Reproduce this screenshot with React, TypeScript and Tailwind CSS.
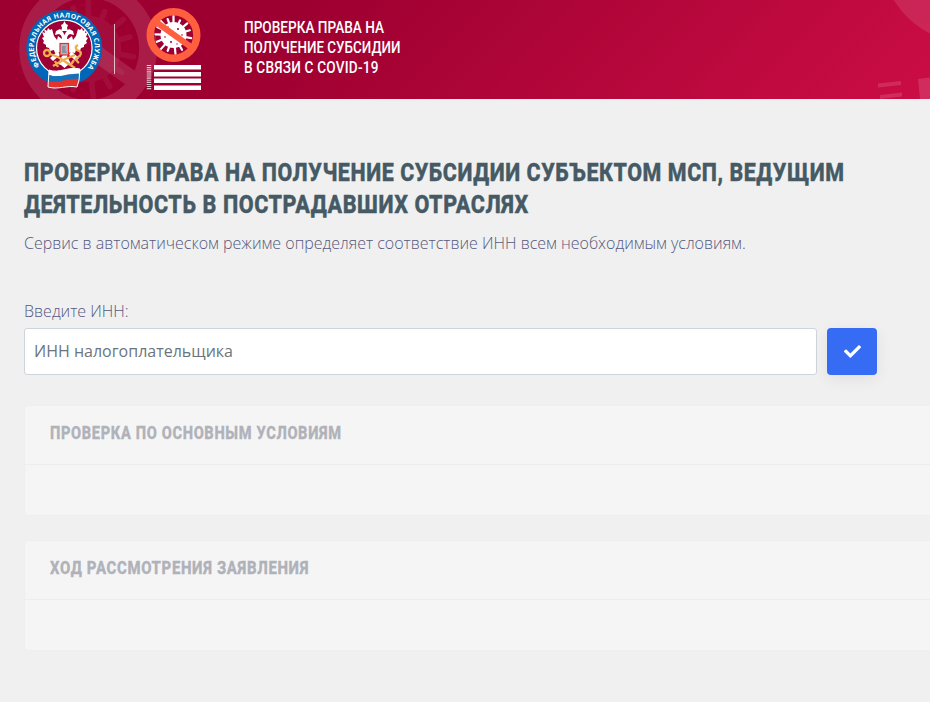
import React from "react";
import { FaCheck } from "react-icons/fa";

type CardProps = {
  title: string;
  scale: string;
};

// angle, length of the spikes of the virus
const spikes = [
  [0, 19], [24, 16], [50, 18], [74, 17], [100, 18], [125, 16], [150, 17],
  [174, 19], [200, 17], [222, 20], [248, 18], [272, 18], [296, 18], [318, 19], [340, 17],
];

function Virus() {
  return (
    <g>
      <g stroke="#fff" strokeWidth="2.200" strokeLinecap="round">
        {spikes.map(([angle, len]) => (
          <path key={angle} d={`M0 0V-${len}`} transform={`translate(27.500 27) rotate(${angle})`} />
        ))}
      </g>
      <circle cx="27.500" cy="27" r="13" fill="#fff" />
    </g>
  );
}

function Backdrop() {
  return (
    <svg className="absolute inset-0" width="930" height="99" viewBox="0 0 930 99">
      <g transform="translate(18 -20) scale(2.550)">
        <g opacity=".05">
          <Virus />
        </g>
        <g opacity=".11" fill="none" stroke="#fff">
          <path d="M10 14l35 25" strokeWidth="6.500" />
          <circle cx="27.500" cy="27" r="23.500" strokeWidth="7" />
        </g>
      </g>
      <circle cx="970" cy="-46" r="89" fill="#fff" fillOpacity=".11" />
      <path d="M878 83.500l23-2.500v4l-23 2.500zM880 95l22-2.500v4l-22 2.500zM918 79l12-1.500V99h-10z" fill="#fff" fillOpacity=".13" />
    </svg>
  );
}

function Emblem() {
  return (
    <svg className="shrink-0" width="78" height="84" viewBox="0 0 78 84">
      <defs>
        <path id="ring" d="M14.300 58.800A30.500 30.500 0 1 1 60.600 60.800" />
      </defs>
      <circle cx="38.300" cy="40" r="38" fill="#0067b8" />
      <circle cx="38.300" cy="40" r="27.800" fill="#9d0034" stroke="#fff" strokeWidth="1.200" />
      <text fill="#fff" fontSize="6.800" fontWeight="700" fontFamily="'Open Sans', sans-serif">
        <textPath href="#ring" startOffset="1" textLength="136">ФЕДЕРАЛЬНАЯ НАЛОГОВАЯ СЛУЖБА</textPath>
      </text>
      {/* eagle */}
      <g fill="#fff">
        <path d="M36 20l-1-3 2-1 1.500-3 1.500 3 2 1-1 3 1 3h-7z" />
        <path d="M36 32c0-4-1-5-3-6l-4 1 1-4 4-2 3 3 1.500 3 1.500-3 3-3 4 2 1 4-4-1c-2 1-3 2-3 6z" />
        <path d="M36 31l-4-3-1 4-3-4-2-7-2 1-2-2-1 3-3-2 1 4-3-1 2 5-2 1 2 3-1 2 3 2v2l3 1 1 3 4-1 1 3 5-1 5 7 5-7 5 1 1-3 4 1 1-3 3-1v-2l3-2-1-2 2-3-2-1 2-5-3 1 1-4-3 2-1-3-2 2-2-1-2 7-3 4-1-4-4 3z" />
        <path d="M32 43l-8 7 3 3 7-6zM45 43l8 7-3 3-7-6zM36 48l-4 8 3 1 3.500 3 3.500-3 3-1-4-8z" />
      </g>
      <g fill="none" stroke="#efae4b" strokeWidth="2.300">
        <circle cx="21" cy="45" r="3" />
        <path d="M24 46l8 3 17 11M52 37c-4 2-2 5 1 6s2 5-1 6-2 4 1 6M27 58l10-6 12-5M29 53l3 6M44 58l4-6" />
      </g>
      <rect x="34" y="35.500" width="8.500" height="11.500" fill="#b0b4bc" stroke="#ee2b24" strokeWidth="1.200" />
      <path d="M36 38h4l-1 3 2 4h-5z" fill="#8a939f" />
      {/* flag */}
      <g>
        <path d="M23 62c10 4 20-4 31-1v5c-11-2-20 5-31 1z" fill="#fff" />
        <path d="M23 67c10 4 20-3 31-1v6c-11-2-20 5-31 1z" fill="#1471b9" />
        <path d="M22 73c10 3 20-4 32-2l-3 8c-11-2-18 3-28 0z" fill="#e2332c" />
        <path d="M23 62c10 4 20-4 31-1l-1 11-2 7c-11-2-18 3-29 0z" fill="none" stroke="#fff" strokeWidth="1" />
      </g>
    </svg>
  );
}

function CovidLogo() {
  return (
    <svg className="shrink-0" width="55" height="84" viewBox="0 0 55 84">
      <Virus />
      <g fill="#9d0034">
        <circle cx="22" cy="19" r=".8" />
        <circle cx="32" cy="21" r="1" />
        <circle cx="36" cy="27" r=".8" />
        <circle cx="19" cy="29" r=".8" />
        <circle cx="25" cy="34" r="1" />
        <circle cx="31" cy="36" r=".7" />
      </g>
      <g fill="none" stroke="#ff5f3e">
        <path d="M10 14l35 25" strokeWidth="6" />
        <circle cx="27.500" cy="27" r="23.300" strokeWidth="7.400" />
      </g>
      <path d="M8 57h47v4.500H8zM8 64h47v4.500H8zM8 70.500h47V75H8zM8 77.500h47V82H8z" fill="#fff" />
      <path d="M3 57v25" stroke="#fff" strokeOpacity=".75" strokeWidth="4.500" strokeDasharray="1.100 1" />
    </svg>
  );
}

function Card({ title, scale }: CardProps) {
  return (
    <section className="h-[111px] w-[1000px] rounded border border-[#eee] bg-[#f5f5f5]">
      <div className="h-[59px] border-b border-[#ededed] pl-[25px] pt-[13px]">
        <h2 className={`inline-block origin-left whitespace-nowrap font-['Roboto',sans-serif] text-[18px] font-extrabold leading-7 tracking-[0.8px] text-[#b0b2ba] [-webkit-text-stroke:0.3px_#b0b2ba] ${scale}`}>
          {title}
        </h2>
      </div>
    </section>
  );
}

function App() {
  return (
    <div className="h-[702px] w-full overflow-hidden bg-[#f0f0f0] font-['Open_Sans',sans-serif] text-base">
      <header className="relative h-[99px] overflow-hidden bg-[linear-gradient(135deg,#9d0030_30%,#cb0d45)]">
        <Backdrop />
        <div className="relative flex pl-[26px] pt-2">
          <Emblem />
          <div className="ml-[10px] mt-4 h-[50px] w-px bg-white/70" />
          <div className="ml-[31px]">
            <CovidLogo />
          </div>
          <div className="ml-[43px] mt-[9px] flex flex-col items-start whitespace-nowrap font-['Roboto',sans-serif] text-[17px] font-medium leading-5 text-white">
            <span className="origin-left scale-x-[0.8]">ПРОВЕРКА ПРАВА НА</span>
            <span className="origin-left scale-x-[0.79]">ПОЛУЧЕНИЕ СУБСИДИИ</span>
            <span className="origin-left scale-x-[0.8] tracking-[0.250px]">В СВЯЗИ С COVID-19</span>
          </div>
        </div>
      </header>

      <main className="pl-6 pt-[57px]">
        <h1 className="flex flex-col items-start whitespace-nowrap font-['Roboto',sans-serif] text-[26.500px] font-extrabold leading-8 tracking-[0.700px] text-[#455a64] [-webkit-text-stroke:0.4px_#455a64]">
          <span className="origin-left scale-x-[0.809]">ПРОВЕРКА ПРАВА НА ПОЛУЧЕНИЕ СУБСИДИИ СУБЪЕКТОМ МСП, ВЕДУЩИМ</span>
          <span className="origin-left scale-x-[0.814]">ДЕЯТЕЛЬНОСТЬ В ПОСТРАДАВШИХ ОТРАСЛЯХ</span>
        </h1>
        <p className="mt-[11px] font-light leading-6 tracking-[-0.01px] text-[#54597d]">
          Сервис в автоматическом режиме определяет соответствие ИНН всем необходимым условиям.
        </p>

        <label className="mt-[44px] block font-light leading-6 text-[#54597d]">Введите ИНН:</label>
        <div className="mt-[5px] flex gap-[10px]">
          <input
            placeholder="ИНН налогоплательщика"
            className="h-[47px] w-[793px] rounded-[3px] border border-[#ced4da] bg-white px-[9px] pb-[2px] placeholder:text-[#6c757d]"
          />
          <button className="flex h-[47px] w-[50px] items-center justify-center rounded bg-[#366cf3] text-white shadow-[0_4px_16px_rgba(0,0,0,0.07)]">
            <FaCheck size={17} />
          </button>
        </div>

        <div className="mt-[30px] flex flex-col gap-6">
          <Card title="ПРОВЕРКА ПО ОСНОВНЫМ УСЛОВИЯМ" scale="scale-x-[0.812]" />
          <Card title="ХОД РАССМОТРЕНИЯ ЗАЯВЛЕНИЯ" scale="scale-x-[0.829]" />
        </div>
      </main>
    </div>
  );
}

export default App;
